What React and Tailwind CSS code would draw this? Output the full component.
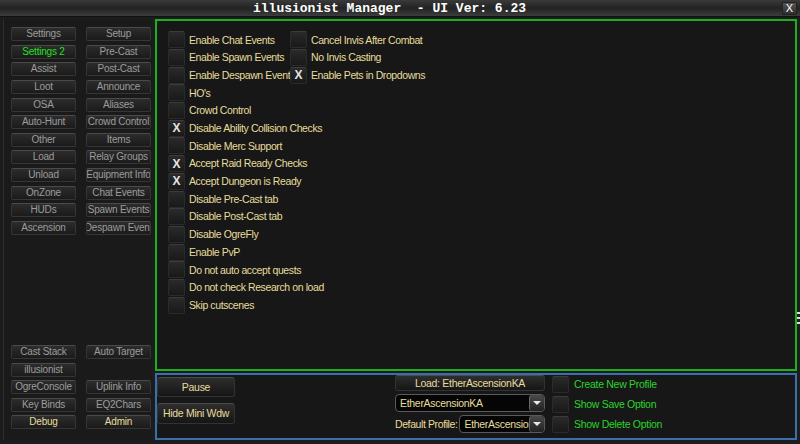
import React from 'react';

const topButtons = [
  ['Settings', 'Setup'],
  ['Settings 2', 'Pre-Cast'],
  ['Assist', 'Post-Cast'],
  ['Loot', 'Announce'],
  ['OSA', 'Aliases'],
  ['Auto-Hunt', 'Crowd Control'],
  ['Other', 'Items'],
  ['Load', 'Relay Groups'],
  ['Unload', 'Equipment Info'],
  ['OnZone', 'Chat Events'],
  ['HUDs', 'Spawn Events'],
  ['Ascension', 'Despawn Event'],
];

const bottomButtons = [
  ['Cast Stack', 'Auto Target'],
  ['illusionist', null],
  ['OgreConsole', 'Uplink Info'],
  ['Key Binds', 'EQ2Chars'],
  ['Debug', 'Admin'],
];

// settings checkboxes; second entry (if any) sits in the right column
const options = [
  [{ label: 'Enable Chat Events' }, { label: 'Cancel Invis After Combat' }],
  [{ label: 'Enable Spawn Events' }, { label: 'No Invis Casting' }],
  [{ label: 'Enable Despawn Event' }, { label: 'Enable Pets in Dropdowns', checked: true }],
  [{ label: "HO's" }],
  [{ label: 'Crowd Control' }],
  [{ label: 'Disable Ability Collision Checks', checked: true }],
  [{ label: 'Disable Merc Support' }],
  [{ label: 'Accept Raid Ready Checks', checked: true }],
  [{ label: 'Accept Dungeon is Ready', checked: true }],
  [{ label: 'Disable Pre-Cast tab' }],
  [{ label: 'Disable Post-Cast tab' }],
  [{ label: 'Disable OgreFly' }],
  [{ label: 'Enable PvP' }],
  [{ label: 'Do not auto accept quests' }],
  [{ label: 'Do not check Research on load' }],
  [{ label: 'Skip cutscenes' }],
];

function NavButton({ label }) {
  if (!label) return <div className="w-[65px]" />;
  let color = 'text-[#9c9c9c]';
  if (label === 'Settings 2') color = 'text-[#22e022]';
  if (label === 'Debug' || label === 'Admin') color = 'text-[#e6dd9c]';
  return (
    <div
      className={`w-[65px] h-[14px] rounded-[2px] border border-[#363636] border-t-[#4a4a4a] bg-gradient-to-b from-[#2c2c2c] to-[#1b1b1b] flex items-center justify-center overflow-hidden whitespace-nowrap text-[10px] tracking-[-0.2px] leading-none ${color}`}
    >
      {label}
    </div>
  );
}

function Box({ checked }) {
  return (
    <div className="w-[17px] h-[17px] shrink-0 rounded-[2px] border border-[#2b2b2b] border-t-[#3c3c3c] bg-gradient-to-b from-[#2a2a2a] to-[#191919] flex items-center justify-center text-[#e4e4e4] text-[12px] font-bold leading-none">
      {checked ? 'X' : ''}
    </div>
  );
}

function Option({ label, checked }) {
  return (
    <div className="flex items-center gap-[4px]">
      <Box checked={checked} />
      <span className="text-[#e6dd9c] text-[10.5px] tracking-[-0.4px] whitespace-nowrap leading-none">{label}</span>
    </div>
  );
}

function Dropdown({ value, width }) {
  return (
    <div className={`${width} h-[18px] rounded-[4px] border border-[#5a5a5a] bg-[#050505] flex items-center overflow-hidden`}>
      <span className="flex-1 pl-[4px] text-[#e6dd9c] text-[10.5px] tracking-[-0.3px] whitespace-nowrap overflow-hidden leading-none">{value}</span>
      <div className="w-[15px] h-[16px] rounded-[3px] bg-gradient-to-b from-[#4a4a4a] to-[#222] border-l border-[#666] flex items-center justify-center">
        <div className="w-0 h-0 border-l-[4px] border-r-[4px] border-t-[4px] border-l-transparent border-r-transparent border-t-[#e8e8e8]" />
      </div>
    </div>
  );
}

function BigButton({ label, className }) {
  return (
    <div className={`rounded-[3px] border border-[#333] border-t-[#4a4a4a] bg-gradient-to-b from-[#2e2e2e] to-[#161616] flex items-center justify-center text-[#e6dd9c] text-[10.5px] tracking-[-0.3px] leading-none whitespace-nowrap ${className}`}>
      {label}
    </div>
  );
}

export default function App() {
  return (
    <div className="w-[800px] h-[444px] bg-[#1c1c1c] flex flex-col overflow-hidden font-['Liberation_Sans',sans-serif]">
      {/* title bar */}
      <div className="h-[17px] shrink-0 flex items-center bg-gradient-to-b from-[#3a3a3a] via-[#232323] to-[#3c3c3c] border-b border-[#111]">
        <div className="w-[253px]" />
        <span className="flex-1 text-white font-bold text-[13px] font-['Liberation_Mono',monospace] whitespace-pre leading-none">
          illusionist Manager  - UI Ver: 6.23
        </span>
        <div className="w-[15px] h-[13px] mr-[3px] bg-gradient-to-b from-[#555] to-[#2e2e2e] border border-[#222] flex items-center justify-center text-white text-[11px] leading-none">
          X
        </div>
      </div>

      <div className="flex-1 flex pt-[2px] pb-[4px]">
        {/* left nav */}
        <div className="w-[155px] shrink-0 pl-[3px] pr-[3px]">
          <div className="h-full border-l border-[#2e2e2e] bg-[#1a1a1a] pl-[7px] pt-[8px] pb-[11px] flex flex-col justify-between">
            <div className="flex flex-col gap-[3.65px]">
              {topButtons.map(([a, b]) => (
                <div key={a} className="flex gap-[10px]">
                  <NavButton label={a} />
                  <NavButton label={b} />
                </div>
              ))}
            </div>
            <div className="flex flex-col gap-[3.5px]">
              {bottomButtons.map(([a, b]) => (
                <div key={a} className="flex gap-[10px]">
                  <NavButton label={a} />
                  <NavButton label={b} />
                </div>
              ))}
            </div>
          </div>
        </div>

        {/* main content */}
        <div className="flex-1 flex flex-col gap-[2px]">
          <div className="flex-1 border-2 border-[#1fae1f] bg-[#171717] pl-[11px] pt-[10px] flex flex-col">
            {options.map((row, i) => (
              <div key={i} className="h-[17.7px] flex items-center">
                <div className="w-[122px] shrink-0">
                  <Option {...row[0]} />
                </div>
                {row[1] && <Option {...row[1]} />}
              </div>
            ))}
          </div>

          {/* bottom control panel */}
          <div className="h-[67px] shrink-0 border-2 border-[#3a6fae] bg-[#171717] flex">
            <div className="w-[78px] pt-[2px] flex flex-col gap-[6px]">
              <BigButton label="Pause" className="h-[20px]" />
              <BigButton label="Hide Mini Wdw" className="h-[21px]" />
            </div>
            <div className="ml-[160px] w-[150px] flex flex-col gap-[3px]">
              <BigButton label="Load: EtherAscensionKA" className="h-[16px] mt-[0px]" />
              <Dropdown value="EtherAscensionKA" width="w-[150px]" />
              <div className="flex items-center gap-[2px]">
                <span className="text-[#e6dd9c] text-[10.5px] tracking-[-0.4px] whitespace-nowrap leading-none">Default Profile:</span>
                <Dropdown value="EtherAscensionKA" width="w-[87px]" />
              </div>
            </div>
            <div className="ml-[7px] pt-[1px] flex flex-col gap-[3px]">
              {['Create New Profile', 'Show Save Option', 'Show Delete Option'].map((l) => (
                <div key={l} className="flex items-center gap-[5px]">
                  <Box />
                  <span className="text-[#2bd42b] text-[10.5px] tracking-[-0.3px] whitespace-nowrap leading-none">{l}</span>
                </div>
              ))}
            </div>
          </div>
        </div>

        {/* right window edge with resize grip */}
        <div className="w-[3px] shrink-0 flex flex-col pt-[293px]">
          <div className="h-[2px] bg-[#ddd]" />
          <div className="h-[3px]" />
          <div className="h-[2px] bg-[#ddd]" />
          <div className="h-[3px]" />
          <div className="h-[2px] bg-[#ddd]" />
        </div>
      </div>
    </div>
  );
}
